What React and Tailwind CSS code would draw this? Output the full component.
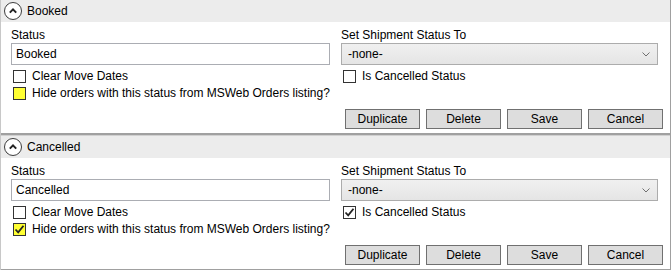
import { useState } from 'react'

const Expander = () => (
	<span className="shrink-0 flex items-center justify-center w-[18px] h-[18px] rounded-full border border-[#3c3c3c] bg-white">
		<svg width="10" height="10" viewBox="0 0 10 10">
			<path d="M1.8 6.6 L5 3.4 L8.2 6.6" fill="none" stroke="#222" strokeWidth="2" />
		</svg>
	</span>
)

const CheckBox = ({ checked, yellow, label }) => (
	<div className="flex items-center h-[17px]">
		<span className={'shrink-0 ml-[2px] w-[13px] h-[13px] border border-[#333] flex items-center justify-center ' + (yellow ? 'bg-[#ffff33]' : 'bg-white')}>
			{checked && (
				<svg width="11" height="11" viewBox="0 0 11 11">
					<path d="M1.5 5.5 L4.2 8.3 L9.5 1.8" fill="none" stroke="#222" strokeWidth="1.8" />
				</svg>
			)}
		</span>
		<span className="ml-[6px] whitespace-nowrap">{label}</span>
	</div>
)

const Btn = ({ children }) => (
	<button className="w-[75px] h-[20px] bg-[#dddddd] border border-[#707070] text-[12px] leading-none text-black">{children}</button>
)

const StatusSection = ({ name, cancelled, hide, last }) => {
	const [value, setValue] = useState(name)
	return (
		<div className={last ? 'border-b border-[#a0a0a0]' : 'border-b-2 border-[#a0a0a0]'}>
			<div className="h-[22px] bg-[#ececec] flex items-center pl-[3px] gap-[5px]">
				<Expander />
				<span>{name}</span>
			</div>
			<div className="pl-[10px] pt-[5px] pb-[4px]">
				<div className="grid grid-cols-[319px_317px] gap-x-[11px]">
					<div>
						<div className="h-[16px] leading-[16px]">Status</div>
						<input
							className="w-full h-[22px] border border-[#abadb3] px-[4px] outline-none bg-white"
							value={value}
							onChange={(e) => setValue(e.target.value)}
						/>
						<div className="mt-[3px]">
							<CheckBox label="Clear Move Dates" />
							<CheckBox label="Hide orders with this status from MSWeb Orders listing?" checked={hide} yellow />
						</div>
					</div>
					<div>
						<div className="h-[16px] leading-[16px]">Set Shipment Status To</div>
						<div className="h-[22px] border border-[#acacac] bg-gradient-to-b from-[#f0f0f0] to-[#e5e5e5] flex items-center justify-between px-[6px]">
							<span>-none-</span>
							<svg width="8" height="5" viewBox="0 0 8 5" className="mr-[1px]">
								<path d="M0.5 0.5 L4 4 L7.5 0.5" fill="none" stroke="#707070" strokeWidth="1" />
							</svg>
						</div>
						<div className="mt-[3px]">
							<CheckBox label="Is Cancelled Status" checked={cancelled} />
						</div>
					</div>
				</div>
				<div className="flex justify-end gap-[6px] pr-[7px] mt-[7px]">
					<Btn>Duplicate</Btn>
					<Btn>Delete</Btn>
					<Btn>Save</Btn>
					<Btn>Cancel</Btn>
				</div>
			</div>
		</div>
	)
}

export default function App() {
	return (
		<div className="w-[672px] h-[271px] bg-white text-[12px] leading-[17px] text-black" style={{ fontFamily: '"Liberation Sans", Arial, sans-serif' }}>
			<div className="w-[671px] border-l border-r border-l-[#c8c8c8] border-r-[#a0a0a0]">
				<StatusSection name="Booked" />
				<div className="h-px bg-[#d0d0d0]" />
				<StatusSection name="Cancelled" cancelled hide last />
			</div>
		</div>
	)
}
